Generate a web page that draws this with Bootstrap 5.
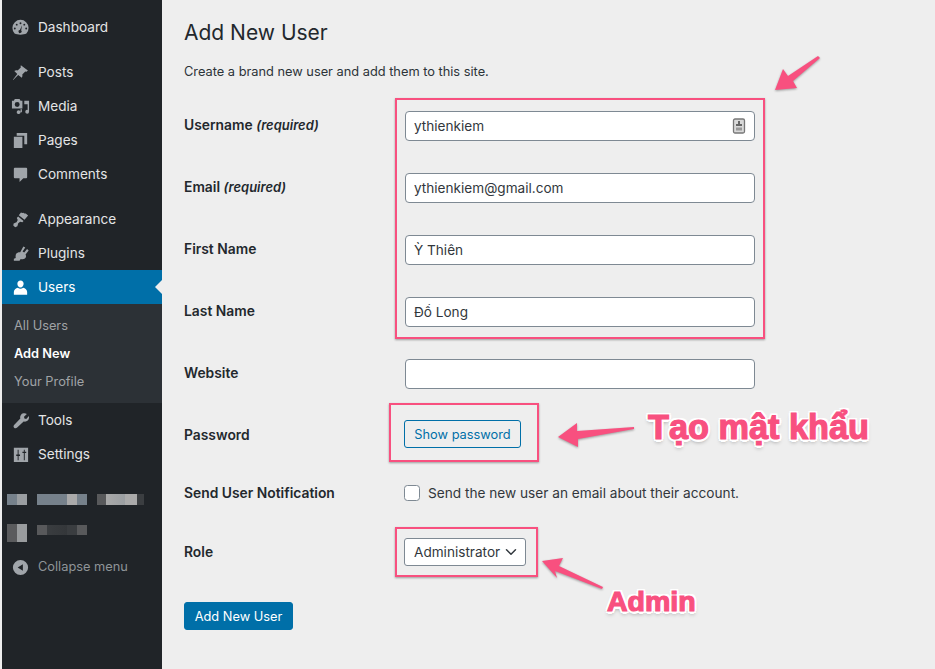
<!DOCTYPE html>
<html lang="vi">
<head>
  <meta charset="UTF-8">
  <meta name="viewport" content="width=device-width, initial-scale=1.0">
  <title>Add New User</title>
  <link href="https://cdn.jsdelivr.net/npm/bootstrap@5.3.0/dist/css/bootstrap.min.css" rel="stylesheet">
  <style>
    html, body { height: 100%; }
    body { background: #eee; font-family: Inter, "Noto Sans", sans-serif; font-size: 13.6px; color: #23282d; overflow: hidden; }
    .page-wrap { position: relative; width: 935px; height: 669px; padding-left: 2px; background: #eee; }
    .side { width: 160px; background: #202428; flex-shrink: 0; padding-top: 10px; }
    .side-item { height: 34px; padding-left: 9px; gap: 8px; color: #e4e5e6; text-decoration: none; position: relative; }
    .side-item svg { width: 19px; height: 19px; fill: #a0a5aa; flex-shrink: 0; }
    .side-gap { height: 11px; }
    .side-gap-lg { height: 19px; }
    .side-item.on { background: #006fa8; color: #fff; }
    .side-item.on svg { fill: #fff; }
    .side-item.on::after { content: ""; position: absolute; right: 0; top: 10px; border: 7px solid transparent; border-right-color: #eee; border-left-width: 0; }
    .side-sub { background: #2c3136; padding: 8px 0 7px; height: 99px; }
    .side-sub a { display: flex; align-items: center; height: 28px; padding-left: 12px; font-size: 12.8px; color: #a0a3a6; text-decoration: none; }
    .side-sub a.on { color: #fff; font-weight: 600; }
    .blur-row { height: 30px; padding: 4px 0 0 5px; }
    .blur-a { width: 20px; height: 11px; background: linear-gradient(90deg, #76818b 50%, #9a9ea1 50%); }
    .blur-b { width: 50px; height: 11px; margin-left: 10px; background: linear-gradient(90deg, #76818b 60%, #aaa 60%, #aaa 80%, #76818b 80%); }
    .blur-c { width: 47px; height: 11px; margin-left: 10px; background: linear-gradient(90deg, #58595b 20%, #a9a9a9 20%, #9a9ea1 60%, #aaa 60%, #aaa 85%, #3b3e41 85%); }
    .blur-d { width: 20px; height: 18px; background: linear-gradient(90deg, #5a5b5d 50%, #999c9e 50%); }
    .blur-e { width: 50px; height: 10px; margin: 1px 0 0 10px; background: linear-gradient(90deg, #58595b 20%, #3a3d40 20%, #34373a 60%, #3a3d40 60%, #3a3d40 80%, #58595b 80%); }
    .collapse-item { color: #8f9498; font-size: 12.8px; }
    .side-item.collapse-item svg { fill: #a0a5aa; }
    .main-area { padding: 0 0 0 22px; }
    .page-title { font-size: 21px; font-weight: 400; margin: 0; padding-top: 20px; line-height: 26px; color: #23282d; }
    .page-desc { font-size: 12.8px; margin: 0; padding-top: 17px; line-height: 18px; height: 49px; color: #2c3338; }
    .field-row { height: 62px; }
    .field-label { width: 221px; flex-shrink: 0; font-weight: 600; font-size: 13.85px; color: #23282d; }
    .field-row .field-label { padding-bottom: 2px; }
    .field-label em { font-weight: 600; font-size: 13px; }
    .wp-input { width: 350px; height: 30px; min-height: 30px; border: 1px solid #7e8993; border-radius: 4px; padding: 0 8px 1px; font-size: 13.6px; color: #32373c; background: #fff; box-shadow: none; }
    .input-box { position: relative; }
    .input-box svg { position: absolute; right: 8px; top: 7px; width: 16px; height: 16px; }
    .row-pass { height: 59px; }
    .row-pass .field-label { padding-top: 1px; }
    .row-notif { height: 58px; }
    .row-role { height: 60px; margin-bottom: 20px; }
    .pass-btn { font-size: 12.8px; height: 28px; width: 117px; margin: 0 0 1px -1px; padding: 2px 0 0; line-height: 1; color: #006fa8; border: 1px solid #006fa8; border-radius: 3px; background: #eee; }
    .notif-check { width: 16px; height: 16px; margin: 0 8px 0 -1px; border-color: #7e8993; border-radius: 4px; }
    .notif-text { font-size: 13.65px; color: #32373c; }
    .role-select { width: 122px; height: 28px; min-height: 28px; margin-left: -1px; padding: 0 0 0 9px; font-size: 13.6px; border: 1px solid #7e8993; border-radius: 3px; color: #32373c; background-position: right 6px center; background-size: 16px 12px; }
    .add-btn { height: 28px; width: 109px; padding: 2px 0 0; font-size: 12.8px; background: #006fa8; color: #fff; border: 1px solid #006fa8; border-radius: 3px; line-height: 1; }
    .mark-box { position: absolute; border: 2px solid #f8507f; box-shadow: 0 1px 2px rgba(0,0,0,.35); pointer-events: none; }
    .mark-a { left: 395px; top: 98px; width: 370px; height: 241px; }
    .mark-b { left: 389px; top: 403px; width: 150px; height: 59px; }
    .mark-c { left: 395px; top: 527px; width: 143px; height: 50px; }
    .mark-arrows { position: absolute; left: 0; top: 0; width: 935px; height: 669px; pointer-events: none; filter: drop-shadow(0 1px 1px rgba(0,0,0,.35)); }
    .mark-text { position: absolute; font-family: "Liberation Sans", sans-serif; font-weight: 700; color: #f8507f; -webkit-text-stroke: 1.2px #f8507f; white-space: nowrap; line-height: 1;
      text-shadow: 2.5px 0 0 #fff, -2.5px 0 0 #fff, 0 2.5px 0 #fff, 0 -2.5px 0 #fff, 2px 2px 0 #fff, -2px 2px 0 #fff, 2px -2px 0 #fff, -2px -2px 0 #fff, 0 3px 4px rgba(0,0,0,.4); }
    .mark-t1 { left: 648px; top: 410px; font-size: 34.300px; }
    .mark-t2 { left: 607px; top: 587px; font-size: 28.500px; }
  </style>
</head>
<body>
  <div class="page-wrap d-flex">
    <nav class="side">
      <a class="side-item d-flex align-items-center" href="#"><svg viewBox="0 0 20 20"><path d="M3.760 16.240A8.500 8.500 0 1 1 16.240 16.240C14.600 17 12.400 17.500 10 17.500S5.400 17 3.760 16.240zM10 4.500a1 1 0 1 0 0 2 1 1 0 0 0 0-2zM6 6a1 1 0 1 0 0 2 1 1 0 0 0 0-2zM14 6a1 1 0 1 0 0 2 1 1 0 0 0 0-2zM4 10a1 1 0 1 0 0 2 1 1 0 0 0 0-2zM16 10a1 1 0 1 0 0 2 1 1 0 0 0 0-2zM11.600 7.500l-2.200 5.100a1.600 1.600 0 1 0 1.300.5z" fill-rule="evenodd"/></svg>Dashboard</a>
      <div class="side-gap"></div>
      <a class="side-item d-flex align-items-center" href="#"><svg viewBox="0 0 20 20"><path d="M10.400 2.300l7.400 5.600-1.500 1.300-1.300-.3-3.100 3.300c.3 1.300.1 2.500-.6 3.400L7.600 12.600 2.300 18l-.3-.3 4.600-6.100-3.100-3.100c.9-.8 2.200-1 3.500-.7l3.300-3.100-.2-1.200z"/></svg>Posts</a>
      <a class="side-item d-flex align-items-center" href="#"><svg viewBox="0 0 20 20"><path d="M1 4h2l1-2h5l1 2h2v8H1zM6.500 5.200a2.600 2.600 0 1 0 0 5.200 2.600 2.600 0 0 0 0-5.200zM14 4h5v11.500a2 2 0 1 1-1.500-1.900V7.500H14zM10 16a2 2 0 1 1 0-.1V13h1.500v3z" fill-rule="evenodd"/></svg>Media</a>
      <a class="side-item d-flex align-items-center" href="#"><svg viewBox="0 0 20 20"><path d="M6 2h11v12h-3V5H6zM3 6h9v12H3z"/></svg>Pages</a>
      <a class="side-item d-flex align-items-center" href="#"><svg viewBox="0 0 20 20"><path d="M4 3h12a1 1 0 0 1 1 1v9a1 1 0 0 1-1 1h-3l-4 4v-4H4a1 1 0 0 1-1-1V4a1 1 0 0 1 1-1z"/></svg>Comments</a>
      <div class="side-gap"></div>
      <a class="side-item d-flex align-items-center" href="#"><svg viewBox="0 0 20 20"><path d="M10.500 2.500l1.500.7 1-.4 1.200 1 1.300-.2 2.500 2.200-3.800 4.400-6-4.700zM7.500 6.800l5.700 4.700-1.200 1.500-2.300-.7L7.600 14l-.9 3.100-2.300 1-2-1.700.4-2.300 3-1.200 1.300-2.300-1-2.300z"/></svg>Appearance</a>
      <a class="side-item d-flex align-items-center" href="#"><svg viewBox="0 0 20 20"><path d="M13 2.500l2 1.300-2.800 4 1.700 1.200 3-3.800 1.700 1.600-3.300 4.200c1 1.700.6 3.300-.7 4.300-1.300 1-2.900 1.100-4.400.4L9 17.500H3v-1.900l2-.8c-.4-2.200-.1-3.500.7-4.700.9-1.100 2.300-1.700 4-1.400z"/></svg>Plugins</a>
      <a class="side-item on d-flex align-items-center" href="#"><svg viewBox="0 0 20 20"><path d="M10 2.500c2 0 3.300 1.600 3.300 3.500S12 10 10 10 6.700 8 6.700 6 8 2.500 10 2.500zM7.200 10.300c.8.600 1.800 1 2.800 1s2-.4 2.800-1c2.200.6 4.200 2.100 4.200 4.400v2.800H3v-2.800c0-2.300 2-3.800 4.200-4.400z"/></svg>Users</a>
      <div class="side-sub">
        <a href="#">All Users</a>
        <a href="#" class="on">Add New</a>
        <a href="#">Your Profile</a>
      </div>
      <a class="side-item d-flex align-items-center" href="#"><svg viewBox="0 0 20 20"><path d="M16.700 3.100l-3 2.900.4 1.900 1.900.4 2.900-3c.4 2-.1 3.600-1.300 4.800-1.200 1.100-2.700 1.400-4.300 1L6.500 17.400c-1 1-2.300 1.100-3.200.2s-.8-2.200.2-3.200L9.800 7.900c-.4-1.600-.1-3.100 1-4.300 1.300-1.200 3.900-1.500 5.900-.5z"/></svg>Tools</a>
      <a class="side-item d-flex align-items-center" href="#"><svg viewBox="0 0 20 20"><path fill-rule="evenodd" d="M3 3h15v15H3zM7 5v5H5.500v1.500H7V16h1v-4.500h1.500V10H8V5zM13.500 5v2H12v1.500h1.500V16h1V8.500H16V7h-1.500V5z"/></svg>Settings</a>
      <div class="side-gap-lg"></div>
      <div class="blur-row d-flex align-items-start"><span class="blur-a"></span><span class="blur-b"></span><span class="blur-c"></span></div>
      <div class="blur-row d-flex align-items-start"><span class="blur-d"></span><span class="blur-e"></span></div>
      <a class="side-item collapse-item d-flex align-items-center" href="#"><svg viewBox="0 0 20 20"><path d="M10 2a8 8 0 1 1 0 16 8 8 0 0 1 0-16zm2.500 4.500L7 10l5.500 3.500z" fill-rule="evenodd"/></svg>Collapse menu</a>
    </nav>

    <main class="main-area flex-grow-1">
      <h1 class="page-title">Add New User</h1>
      <p class="page-desc">Create a brand new user and add them to this site.</p>
      <form>
        <div class="field-row d-flex align-items-center">
          <label class="field-label" for="username">Username <em>(required)</em></label>
          <div class="input-box">
            <input id="username" class="form-control wp-input" type="text" value="ythienkiem">
            <svg viewBox="0 0 16 16"><rect x="2.500" y="1" width="11" height="14" rx="1.500" fill="#d9d9d9" stroke="#777" stroke-width="1.300"/><rect x="7" y="3" width="2" height="3" fill="#666"/><rect x="5" y="6" width="6" height="2" fill="#666"/><rect x="5" y="9.500" width="6" height="3" fill="#999"/></svg>
          </div>
        </div>
        <div class="field-row d-flex align-items-center">
          <label class="field-label" for="email">Email <em>(required)</em></label>
          <input id="email" class="form-control wp-input" type="text" value="ythienkiem@gmail.com">
        </div>
        <div class="field-row d-flex align-items-center">
          <label class="field-label" for="first">First Name</label>
          <input id="first" class="form-control wp-input" type="text" value="Ỳ Thiên">
        </div>
        <div class="field-row d-flex align-items-center">
          <label class="field-label" for="last">Last Name</label>
          <input id="last" class="form-control wp-input" type="text" value="Đồ Long">
        </div>
        <div class="field-row d-flex align-items-center">
          <label class="field-label" for="site">Website</label>
          <input id="site" class="form-control wp-input" type="text">
        </div>
        <div class="row-pass d-flex align-items-center">
          <span class="field-label">Password</span>
          <button type="button" class="btn pass-btn">Show password</button>
        </div>
        <div class="row-notif d-flex align-items-center">
          <span class="field-label">Send User Notification</span>
          <input id="notif" class="form-check-input notif-check" type="checkbox">
          <label class="notif-text" for="notif">Send the new user an email about their account.</label>
        </div>
        <div class="row-role d-flex align-items-center">
          <label class="field-label" for="role">Role</label>
          <select id="role" class="form-select role-select"><option>Administrator</option></select>
        </div>
        <button type="button" class="btn add-btn">Add New User</button>
      </form>
    </main>

    <div class="mark-box mark-a"></div>
    <div class="mark-box mark-b"></div>
    <div class="mark-box mark-c"></div>
    <svg class="mark-arrows" viewBox="0 0 935 669">
      <path fill="#f8507f" d="M775 90L783 69 788 76 818 56 820 58 793 81 797 88z"/>
      <path fill="#f8507f" d="M558 437L577 423 577 431 634 427 634 429 578 439 578 447z"/>
      <path fill="#f8507f" d="M542 561L563 558 559 566 603 587 602 589 555 571 557 578z"/>
    </svg>
    <div class="mark-text mark-t1">Tạo mật khẩu</div>
    <div class="mark-text mark-t2">Admin</div>
  </div>
  <script src="https://cdn.jsdelivr.net/npm/bootstrap@5.3.0/dist/js/bootstrap.bundle.min.js"></script>
</body>
</html>
